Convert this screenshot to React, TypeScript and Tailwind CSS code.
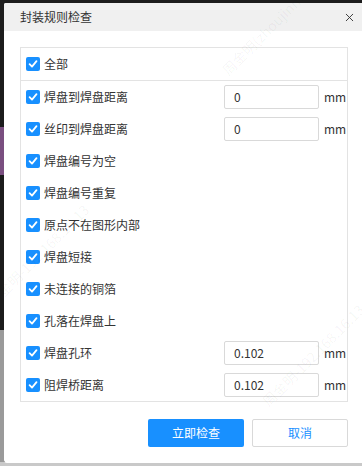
import { X } from "lucide-react";

const rows = [
  { label: "焊盘到焊盘距离", value: "0" },
  { label: "丝印到焊盘距离", value: "0" },
  { label: "焊盘编号为空" },
  { label: "焊盘编号重复" },
  { label: "原点不在图形内部" },
  { label: "焊盘短接" },
  { label: "未连接的铜箔" },
  { label: "孔落在焊盘上" },
  { label: "焊盘孔环", value: "0.102" },
  { label: "阻焊桥距离", value: "0.102" },
];

function Check() {
  return (
    <span className="flex h-[14px] w-[14px] shrink-0 items-center justify-center rounded-[2px] bg-[#1890ff]">
      <svg width="10" height="10" viewBox="0 0 10 10" fill="none">
        <path d="M1.6 5.2 L4 7.6 L8.5 2.2" stroke="white" strokeWidth="1.8" strokeLinecap="round" strokeLinejoin="round" />
      </svg>
    </span>
  );
}

// faint diagonal watermark text
function Mark({ text, className }: { text: string; className: string }) {
  return (
    <span className={`pointer-events-none absolute -rotate-45 whitespace-nowrap text-[14px] text-[#000]/[0.045] ${className}`}>
      {text}
    </span>
  );
}

export default function App() {
  return (
    <div
      className="relative h-[466px] w-[362px] overflow-hidden bg-[#1c1c1c]"
      style={{ fontFamily: '"Noto Sans CJK SC", "Liberation Sans", sans-serif' }}
    >
      {/* BACKDROP BITS */}
      <div className="absolute left-0 top-[127px] h-[48px] w-[4px] bg-[#7a4f80]" />
      <div className="absolute left-0 top-[330px] h-[136px] w-[4px] bg-[#9a9a9a]" />
      <div className="absolute bottom-0 left-0 h-[4px] w-[362px] bg-[#c9c9c9]" />

      <div className="absolute left-[4px] top-[3px] flex h-[460px] w-[358px] flex-col overflow-hidden rounded-bl-[3px] rounded-tl-[2px] bg-white">
        {/* HEADER */}
        <div className="flex h-[28px] shrink-0 items-center justify-between bg-[#f0f0f0] pl-[16px] pr-[6px]">
          <span className="text-[12px] text-[#333]">封装规则检查</span>
          <X size={13} strokeWidth={1.7} className="text-[#333]" />
        </div>

        {/* LIST BOX */}
        <div className="ml-[16px] mt-[16px] w-[328px] border border-[#e3e3e3]">
          <div className="flex h-[33px] items-center gap-[4px] border-b border-[#e3e3e3] pl-[5px]">
            <Check />
            <span className="text-[12px] text-[#333]">全部</span>
          </div>
          {rows.map((r) => (
            <div key={r.label} className="flex h-[32px] items-center pl-[5px]">
              <Check />
              <span className="ml-[4px] w-[180px] text-[12px] text-[#333]">{r.label}</span>
              {r.value && (
                <>
                  <div className="flex h-[24px] w-[95px] items-center rounded-[2px] border border-[#d9d9d9] pl-[9px] text-[12px] text-[#333]">
                    {r.value}
                  </div>
                  <span className="ml-[5px] text-[12px] text-[#333]">mm</span>
                </>
              )}
            </div>
          ))}
        </div>

        {/* ACTIONS */}
        <div className="ml-[144px] mt-[17px] flex gap-[8px]">
          <button className="h-[28px] w-[96px] rounded-[2px] bg-[#1890ff] text-[12px] text-white">立即检查</button>
          <button className="h-[28px] w-[96px] rounded-[2px] border border-[#d9d9d9] bg-white text-[12px] text-[#1890ff]">取消</button>
        </div>
      </div>

      {/* WATERMARKS */}
      <Mark text="周金明(zhoujinming)" className="left-[205px] top-[15px]" />
      <Mark text="周金明-192.168.16.13" className="left-[-30px] top-[245px]" />
      <Mark text="周金明-192.168.16.13" className="left-[245px] top-[345px]" />
    </div>
  );
}
